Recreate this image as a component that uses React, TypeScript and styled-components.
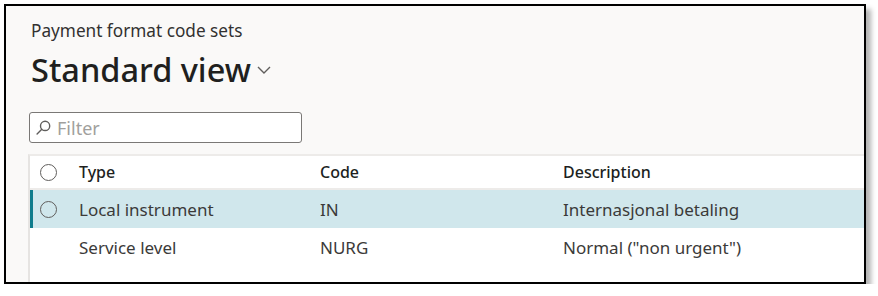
import styled, { createGlobalStyle } from "styled-components";

const GlobalStyle = createGlobalStyle`
  body {
    margin: 0;
    background: #ffffff;
    font-family: "Noto Sans", "Open Sans", sans-serif;
  }
`;

interface CodeRow {
  type: string;
  code: string;
  description: string;
  selected?: boolean;
}

const rows: CodeRow[] = [
  { type: "Local instrument", code: "IN", description: "Internasjonal betaling", selected: true },
  { type: "Service level", code: "NURG", description: 'Normal ("non urgent")' },
];

const Frame = styled.div`
  margin: 4px 0 0 4px;
  width: 858px;
  height: 276px;
  border: 2px solid #000;
  background: #faf9f8;
  box-shadow: 5px 5px 5px rgba(0, 0, 0, 0.3);
  overflow: hidden;
  display: flex;
  flex-direction: column;
`;

const Header = styled.div`
  padding: 14px 0 0 25px;
  display: flex;
  flex-direction: column;
`;

const Caption = styled.div`
  font-size: 17.2px;
  color: #323130;
  line-height: 22px;
`;

const ViewTitle = styled.div`
  display: flex;
  align-items: center;
  gap: 5px;
  margin-top: 8px;
  font-size: 32.5px;
  font-weight: 500;
  color: #201f1e;
  line-height: 40px;
`;

const FilterBox = styled.div`
  margin: 22px 0 0 -2px;
  width: 265px;
  height: 29px;
  border: 1px solid #7a7876;
  border-radius: 3px;
  background: #fff;
  display: flex;
  align-items: center;
  gap: 6px;
  padding-left: 6px;
`;

const Placeholder = styled.span`
  font-size: 18px;
  color: #a19f9d;
`;

const Grid = styled.div`
  margin: 11px 0 0 22px;
  flex: 1;
  background: #fff;
  border-left: 2px solid #e6e4e2;
  border-top: 2px solid #edebe9;
`;

const GridRow = styled.div<{ $selected?: boolean; $head?: boolean }>`
  display: grid;
  grid-template-columns: 49px 241px 243px 1fr;
  align-items: center;
  height: ${({ $head }) => ($head ? "32px" : "38px")};
  background: ${({ $selected }) => ($selected ? "#d0e7ec" : "transparent")};
  box-shadow: ${({ $selected }) => ($selected ? "inset 3px 0 0 #0f7c8c" : "none")};
  border-bottom: ${({ $head }) => ($head ? "2px solid #edebe9" : "none")};
  font-size: ${({ $head }) => ($head ? "16px" : "17px")};
  color: ${({ $head }) => ($head ? "#201f1e" : "#3b3a39")};
  font-weight: ${({ $head }) => ($head ? 500 : 400)};
`;

const Radio = styled.span`
  justify-self: start;
  margin-left: 10px;
  width: 15px;
  height: 15px;
  border: 1.5px solid #605e5c;
  border-radius: 50%;
`;

const Cell = styled.span`
  white-space: nowrap;
`;

const SearchIcon = () => (
  <svg width="15" height="15" viewBox="0 0 14 14" fill="none" stroke="#605e5c" strokeWidth="1.3">
    <circle cx="8.5" cy="5.5" r="4.3" />
    <path d="M5.4 8.6 L1 13" strokeLinecap="round" />
  </svg>
);

const Chevron = () => (
  <svg width="16" height="10" viewBox="0 0 16 10" fill="none" stroke="#605e5c" strokeWidth="1.4">
    <path d="M2 2 L8 8 L14 2" />
  </svg>
);

export default function App() {
  return (
    <>
      <GlobalStyle />
      <Frame>
        <Header>
          <Caption>Payment format code sets</Caption>
          <ViewTitle>
            Standard view
            <Chevron />
          </ViewTitle>
          <FilterBox>
            <SearchIcon />
            <Placeholder>Filter</Placeholder>
          </FilterBox>
        </Header>
        <Grid>
          <GridRow $head>
            <Radio />
            <Cell>Type</Cell>
            <Cell>Code</Cell>
            <Cell>Description</Cell>
          </GridRow>
          {rows.map((r) => (
            <GridRow key={r.code} $selected={r.selected}>
              {r.selected ? <Radio /> : <span />}
              <Cell>{r.type}</Cell>
              <Cell>{r.code}</Cell>
              <Cell>{r.description}</Cell>
            </GridRow>
          ))}
        </Grid>
      </Frame>
    </>
  );
}
